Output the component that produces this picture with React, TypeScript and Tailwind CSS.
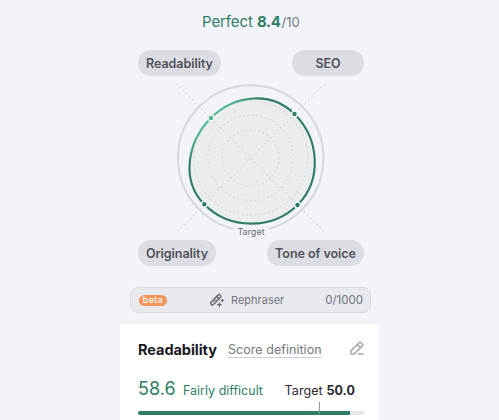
const grid = [28.3, 42.8, 57.2];

const points = [
  { x: 211, y: 118, color: "#4db591" },
  { x: 294.5, y: 114, color: "#2f7d66" },
  { x: 297.5, y: 205, color: "#2f7d66" },
  { x: 204.3, y: 204.3, color: "#2f7d66" },
];

const shape =
  "M211 118 C234.3 94.7 271.2 90.7 294.5 114 C319.5 139 322.5 180 297.5 205 C272.5 230 229.3 230 204.3 204.3 C180.8 180.8 187 142 211 118 Z";

function Pill({ label, className }: { label: string; className: string }) {
  return (
    <div className={`h-[26px] pt-0.5 rounded-full bg-[#dcdde2] flex items-center justify-center text-[12.5px] tracking-[-0.04px] font-semibold text-[#50515a] whitespace-nowrap ${className}`}>
      {label}
    </div>
  );
}

function RadarChart() {
  return (
    <svg viewBox="138 76 226 164" className="block w-[226px] h-[164px]">
      <defs>
        <radialGradient id="curve" gradientUnits="userSpaceOnUse" cx="211" cy="118" r="52">
          <stop offset="0" stopColor="#56bd99" />
          <stop offset="0.5" stopColor="#4db08d" />
          <stop offset="1" stopColor="#2f7d66" />
        </radialGradient>
      </defs>
      <circle cx="250.7" cy="158" r="72.7" fill="none" stroke="#d8d9da" strokeWidth="2.2" />
      <path d={shape} fill="#ebecf0" />
      <g fill="none" stroke="#d8d9db" strokeWidth="1.3" strokeDasharray="2 2.4">
        {grid.map((r) => (
          <circle key={r} cx="250.7" cy="158" r={r} />
        ))}
        <path d="M176.5 83.5 L325 232.5 M325 83.5 L176.5 232.5" />
      </g>
      <path d={shape} fill="none" stroke="url(#curve)" strokeWidth="2.1" />
      {points.map((p) => (
        <circle key={p.x} cx={p.x} cy={p.y} r="2.9" fill={p.color} stroke="#f4f5f9" strokeWidth="1.4" />
      ))}
      <rect x="233.5" y="226" width="35" height="12" fill="#f3f4f9" />
      <text x="251" y="235" textAnchor="middle" fontSize="9" fill="#696a6e">
        Target
      </text>
    </svg>
  );
}

function WandIcon() {
  return (
    <svg viewBox="0 0 14 14" className="w-[14px] h-[14px]" fill="none" stroke="#62626d" strokeWidth="1.3" strokeLinecap="round" strokeLinejoin="round">
      <path d="M1.1 9.2 8 2 Q9.1 1 10.3 2.1 Q11.4 3.2 10.4 4.3 L3.5 11.5 Q2.3 12.6 1.2 11.5 Q.1 10.4 1.1 9.2Z" />
      <path d="M6.7 3.5 8.9 5.8" />
      <path d="M3.6 8.9 6 6.4" strokeWidth="1" />
      <path d="M12.3 6.4v2M11.3 7.4h2M9.4 9.8v3.6M7.6 11.6h3.6" strokeWidth="1.1" />
    </svg>
  );
}

function EditIcon() {
  return (
    <svg viewBox="0 0 14 14" className="w-[14px] h-[14px]" fill="none" stroke="#a6a6a8" strokeWidth="1.5" strokeLinejoin="round">
      <path d="M.9 13.1V9.9L9.3 1.5Q10 .8 10.7 1.5L12.5 3.3Q13.2 4 12.5 4.7L4.1 13.1Z" />
      <path d="M7.2 3.6 10.4 6.8M8 13.1H13.6" />
    </svg>
  );
}

export default function App() {
  return (
    <div className="w-[499px] h-[420px] overflow-hidden bg-[#f3f4f9] font-[Inter,sans-serif]">
      <div className="w-[260px] ml-[120px] h-full flex flex-col">
        <div className="h-[50px] pt-[11px] pl-[82px] leading-5 whitespace-nowrap text-[#2f7d66]">
          <span className="text-[15px] tracking-[-0.1px]">Perfect </span>
          <span className="text-[15px] font-bold tracking-[-0.3px]">8.4</span>
          <span className="ml-px text-[13px] text-[#76777d]">/10</span>
        </div>

        {/* Score radar */}
        <div className="px-[18px] w-[262px]">
          <div className="flex justify-between">
            <Pill label="Readability" className="w-[83px]" />
            <Pill label="SEO" className="w-[72px]" />
          </div>
          <RadarChart />
          <div className="flex justify-between">
            <Pill label="Originality" className="w-[78px]" />
            <Pill label="Tone of voice" className="w-[97px]" />
          </div>
        </div>

        {/* Rephraser bar */}
        <div className="mt-[21px] ml-[10px] w-[241px] h-[26px] shrink-0 rounded-lg border border-[#d8d9df] bg-[#e8e9ef] flex items-center pl-2 pr-[7px] text-[11px] text-[#73747c]">
          <span className="w-7 h-[11px] rounded-full bg-[#f2955b] text-white text-[9px] leading-[10px] font-medium tracking-[0.3px] text-center">
            beta
          </span>
          <span className="ml-[43px] flex items-center">
            <WandIcon />
            <span className="ml-[7px]">Rephraser</span>
          </span>
          <span className="ml-auto pt-0.5 text-[11.5px]">0/1000</span>
        </div>

        {/* Readability card */}
        <div className="mt-[11px] w-[259px] h-[96px] bg-white pl-[18px] pr-[15px] pt-4">
          <div className="h-5 flex items-center whitespace-nowrap">
            <h2 className="w-[79px] text-[14.5px] tracking-[-0.05px] font-bold text-[#18191f]">Readability</h2>
            <a className="ml-[11px] text-[12.5px] tracking-[0.04px] leading-[15px] text-[#77787c] border-b border-[#cfcfd1]">Score definition</a>
            <span className="ml-auto -mt-1">
              <EditIcon />
            </span>
          </div>
          <div className="mt-[15px] h-6 flex items-baseline whitespace-nowrap">
            <span className="w-[38px] text-[18px] text-[#2f7d66]">58.6</span>
            <span className="ml-[7px] text-[12.5px] text-[#2f7d66]">Fairly difficult</span>
            <span className="ml-auto mr-[9px] text-[12.5px] tracking-[0.08px] text-[#27282d]">
              Target <b className="font-bold">50.0</b>
            </span>
          </div>
          <div className="relative mt-3 h-1 rounded-full bg-[#e6e6e8]">
            <div className="w-[212px] h-full rounded-l-full bg-[#2f7d66]" />
            <div className="absolute left-[181px] -top-[9px] w-px h-3 bg-[#8b9793]" />
          </div>
        </div>
      </div>
    </div>
  );
}
